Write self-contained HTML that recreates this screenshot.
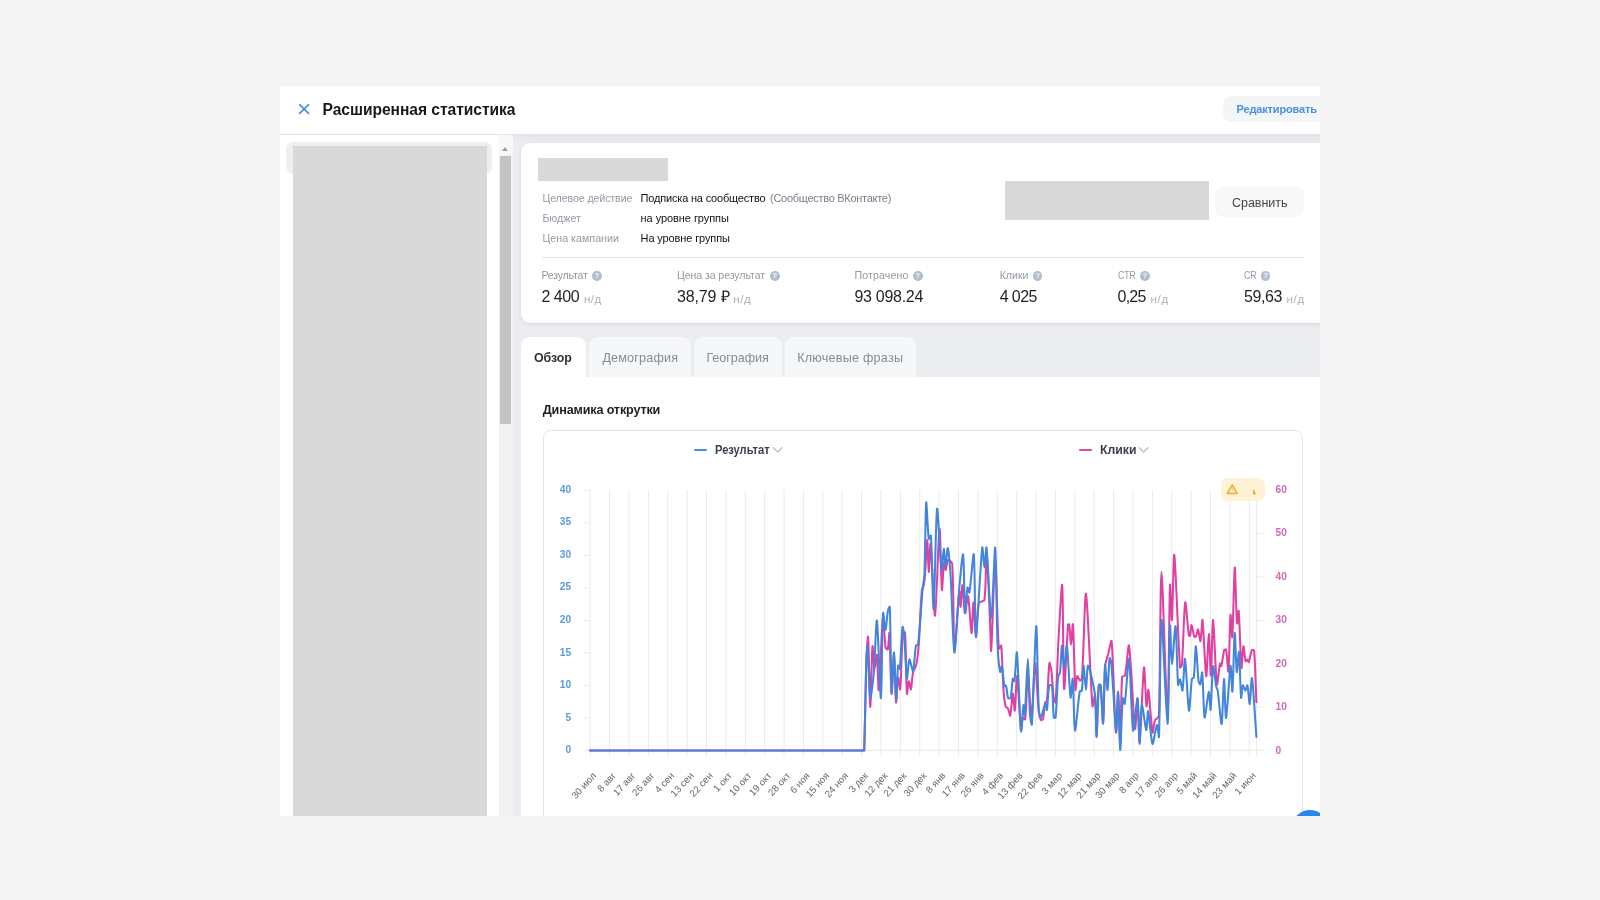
<!DOCTYPE html>
<html lang="ru">
<head>
<meta charset="utf-8">
<title>Расширенная статистика</title>
<style>
*{box-sizing:border-box;margin:0;padding:0}
html,body{width:1600px;height:900px;overflow:hidden;background:#f5f5f5;font-family:"Liberation Sans",sans-serif;}
#shot{position:absolute;left:280px;top:85px;width:1040px;height:731px;background:#fff;overflow:hidden}
#in{position:absolute;left:-280px;top:-85px;width:1600px;height:900px;will-change:transform;filter:blur(0.55px)}
#in *{position:absolute;white-space:nowrap}
#in span{position:static}
.t{line-height:1}
.yl{font-size:10.2px;font-weight:bold;color:#5b9bdb;text-align:right}
.yr{font-size:10.2px;font-weight:bold;color:#d468b4}
.xl{font-size:9.7px;color:#666;line-height:12px;transform-origin:100% 50%;transform:rotate(-48deg)}
.q{width:9.4px;height:9.4px;border-radius:50%;background:#b5bfcc;color:#f4f6f8;font-size:7.5px;font-weight:bold;line-height:9.6px;text-align:center}
</style>
</head>
<body>
<div id="shot"><div id="in">
  <!-- header -->
  <div style="left:280px;top:85px;width:1040px;height:50px;background:#fff;border-bottom:1px solid #e4e5e7;border-top:1px solid #f0f0f0"></div>
  <svg style="left:298px;top:103px" width="12" height="12" viewBox="0 0 12 12"><path d="M1.7 1.6L10.5 10.4M10.5 1.6L1.7 10.4" stroke="#3f8de2" stroke-width="1.5" stroke-linecap="round" fill="none"/></svg>
  <div style="left:1222.5px;top:96px;width:120px;height:26px;border-radius:8px;background:#f4f5f7"></div>

  <!-- sidebar -->
  <div style="left:286px;top:142px;width:205.5px;height:32px;border-radius:7px;background:#efefef"></div>
  <div style="left:292.7px;top:146px;width:194.5px;height:680px;background:#d9d9d9"></div>
  <!-- scrollbar -->
  <div style="left:499.3px;top:135px;width:13.7px;height:690px;background:#f2f2f2"></div>
  <div style="left:499.3px;top:135px;width:13.7px;height:20px;background:#f8f8f8"></div>
  <div style="left:501.7px;top:146.6px;width:0;height:0;border-left:3.7px solid transparent;border-right:3.7px solid transparent;border-bottom:4px solid #a0a0a0"></div>
  <div style="left:500.4px;top:156px;width:10.7px;height:268.3px;background:#c3c3c3"></div>

  <!-- content bg -->
  <div style="left:513px;top:135px;width:820px;height:690px;background:#ebedf0"></div>
  <div style="left:513px;top:135px;width:820px;height:7px;background:linear-gradient(#e3e5e9,#ebedf0)"></div>

  <!-- card 1 -->
  <div style="left:521.3px;top:143.3px;width:820px;height:180px;background:#fff;border-radius:9px;box-shadow:0 1px 4px rgba(0,0,0,.10)"></div>
  <div style="left:538.3px;top:158px;width:130px;height:22.7px;background:#d9d9d9"></div>
  <div style="left:1005px;top:181px;width:204px;height:38.5px;background:#d9d9d9"></div>
  <div style="left:1215.3px;top:187px;width:88.7px;height:29.5px;border-radius:8px;background:#f8f8f9"></div>
  <div style="left:541.5px;top:257px;width:763px;height:1px;background:#e3e8ec"></div>

  <div class="q" style="left:592.4px;top:271.2px">?</div>
  <div class="q" style="left:770.2px;top:271.2px">?</div>
  <div class="q" style="left:913.2px;top:271.2px">?</div>
  <div class="q" style="left:1033px;top:271.2px">?</div>
  <div class="q" style="left:1140.2px;top:271.2px">?</div>
  <div class="q" style="left:1261px;top:271.2px">?</div>

  <!-- tabs -->
  <div style="left:588.7px;top:337px;width:102.3px;height:45px;border-radius:9px 9px 0 0;background:#f6f7f9"></div>
  <div style="left:693.7px;top:337px;width:88px;height:45px;border-radius:9px 9px 0 0;background:#f6f7f9"></div>
  <div style="left:784.8px;top:337px;width:131.2px;height:45px;border-radius:9px 9px 0 0;background:#f6f7f9"></div>
  <div style="left:521.3px;top:337px;width:64.3px;height:45px;border-radius:9px 9px 0 0;background:#fff"></div>
  <!-- panel 2 -->
  <div style="left:521.3px;top:376.7px;width:820px;height:460px;background:#fff"></div>
  <!-- chart frame -->
  <div style="left:543.3px;top:430.4px;width:760px;height:420px;border:1px solid #e2e4e7;border-radius:8px;background:#fff"></div>

  <!-- legend -->
  <div style="left:694px;top:449.4px;width:13.2px;height:2px;border-radius:1px;background:#4a8fdd"></div>
  <div style="left:1078.7px;top:449.4px;width:13.2px;height:2px;border-radius:1px;background:#e0479f"></div>
  <svg style="left:772px;top:446px" width="12" height="8" viewBox="0 0 12 8"><path d="M1.3 1.8L5.6 6L9.9 1.8" stroke="#b9c1cb" stroke-width="1.4" fill="none" stroke-linecap="round" stroke-linejoin="round"/></svg>
  <svg style="left:1138px;top:446px" width="12" height="8" viewBox="0 0 12 8"><path d="M1.3 1.8L5.6 6L9.9 1.8" stroke="#b9c1cb" stroke-width="1.4" fill="none" stroke-linecap="round" stroke-linejoin="round"/></svg>

<svg id="chart" style="left:0;top:0" width="1600" height="900" viewBox="0 0 1600 900">
<path d="M590.20 490V756.5M609.59 490V756.5M628.97 490V756.5M648.36 490V756.5M667.74 490V756.5M687.12 490V756.5M706.51 490V756.5M725.90 490V756.5M745.28 490V756.5M764.67 490V756.5M784.05 490V756.5M803.44 490V756.5M822.82 490V756.5M842.21 490V756.5M861.59 490V756.5M880.98 490V756.5M900.36 490V756.5M919.75 490V756.5M939.13 490V756.5M958.52 490V756.5M977.90 490V756.5M997.29 490V756.5M1016.67 490V756.5M1036.06 490V756.5M1055.44 490V756.5M1074.83 490V756.5M1094.21 490V756.5M1113.60 490V756.5M1132.98 490V756.5M1152.37 490V756.5M1171.75 490V756.5M1191.14 490V756.5M1210.52 490V756.5M1229.91 490V756.5M1249.29 490V756.5M1256.6 490V756.5M583 490.30H590.3M583 522.81H590.3M583 555.32H590.3M583 587.83H590.3M583 620.34H590.3M583 652.85H590.3M583 685.36H590.3M583 717.87H590.3M583 750.38H590.3M1256.6 490.30H1264M1256.6 533.65H1264M1256.6 577.00H1264M1256.6 620.35H1264M1256.6 663.70H1264M1256.6 707.05H1264M1256.6 750.40H1264M583 750.4H1264" stroke="#ebebeb" stroke-width="1" fill="none"/>
<path d="M590.0 750.4C663.8 750.4 789.4 750.4 863.2 750.4C863.5 750.4 864.2 750.4 864.2 750.4C865.1 726.3 865.6 684.4 866.4 660.0C866.6 653.8 867.8 633.8 868.1 636.9C868.9 646.4 869.6 705.5 870.2 706.9C870.8 708.1 871.7 654.0 872.5 646.2C872.8 643.5 873.8 666.5 874.5 668.0C874.9 668.9 876.6 653.4 876.9 655.0C877.7 659.3 878.2 693.3 878.8 690.0C879.9 683.1 881.7 625.1 883.0 617.0C883.5 613.6 884.4 639.5 885.6 647.5C885.7 648.2 887.6 650.0 887.8 649.4C888.6 646.1 889.2 630.4 889.4 633.0C890.2 642.4 890.8 690.1 891.6 693.8C892.1 696.1 893.5 653.9 894.0 655.0C894.7 656.3 895.3 698.5 896.0 702.5C896.4 704.6 897.3 679.9 898.1 677.5C898.5 676.3 900.0 691.4 900.2 689.4C901.2 681.3 901.4 653.2 902.5 640.0C902.7 637.9 904.9 630.8 905.0 632.5C906.1 645.4 906.1 682.8 906.9 693.8C907.1 696.0 908.1 682.0 908.8 681.2C909.2 680.8 910.5 690.2 910.9 689.4C911.7 687.7 912.1 676.6 913.1 672.0C913.5 670.0 915.8 667.0 916.2 665.0C917.3 660.4 918.1 652.2 918.5 647.5C919.7 632.0 920.6 605.4 921.9 590.0C922.0 588.8 923.3 587.1 923.5 586.0C924.1 583.1 924.8 578.0 925.0 575.0C925.8 565.6 926.7 540.4 927.2 540.0C927.7 539.6 928.3 571.4 928.8 571.9C929.2 572.4 930.1 540.4 930.6 543.8C931.8 552.2 933.9 617.4 935.0 615.6C936.3 613.4 938.4 532.8 939.5 528.8C940.3 525.9 941.1 583.7 941.9 590.0C942.3 592.8 943.2 566.7 944.0 562.5C944.2 561.3 945.3 570.3 945.8 570.0C946.4 569.6 946.9 561.1 948.0 560.0C948.6 559.4 952.1 562.3 952.2 563.8C953.9 586.6 953.3 645.6 954.4 650.0C955.2 653.0 958.1 600.4 959.4 591.2C959.8 588.8 960.3 607.6 960.6 606.9C961.1 605.9 962.0 584.3 962.5 585.0C963.2 585.9 964.1 611.1 965.0 613.0C965.6 614.1 967.5 594.5 968.1 596.2C969.3 600.0 970.7 632.2 971.5 633.1C972.2 633.9 972.9 602.0 973.5 602.5C974.1 603.0 975.3 636.8 976.0 636.9C976.7 637.0 976.8 611.5 978.8 603.1C979.1 601.5 984.2 601.6 984.4 600.0C986.2 587.8 985.9 549.8 986.5 552.0C987.4 555.2 989.1 601.6 990.0 620.0C990.4 628.3 990.9 654.7 991.2 650.6C992.3 638.5 994.2 560.3 995.2 560.0C996.3 559.8 997.2 626.6 998.8 648.8C998.8 649.8 1001.1 644.7 1001.2 645.6C1002.4 655.8 1002.6 678.0 1003.5 690.0C1003.8 694.4 1004.6 702.1 1005.6 706.2C1005.8 707.1 1007.7 707.9 1008.1 708.8C1008.9 710.4 1009.9 716.6 1010.2 715.6C1011.2 712.5 1012.1 694.5 1012.8 693.8C1013.3 693.2 1014.4 712.2 1014.8 710.6C1015.5 707.4 1016.4 674.2 1017.1 676.2C1018.1 679.4 1019.7 721.0 1021.0 730.0C1021.3 732.1 1022.1 719.8 1023.0 717.5C1023.2 717.0 1025.2 720.1 1025.2 719.4C1026.5 708.6 1027.0 675.2 1027.9 675.0C1028.7 674.8 1030.7 719.4 1031.5 718.0C1032.6 716.2 1034.0 663.9 1035.0 663.0C1035.9 662.2 1037.4 698.8 1038.8 712.0C1039.0 714.2 1040.0 718.5 1040.9 720.0C1041.2 720.4 1042.9 719.6 1043.0 719.0C1044.0 714.7 1044.3 706.3 1045.3 702.0C1045.4 701.6 1046.9 701.7 1046.9 701.2C1048.0 691.2 1048.4 669.4 1049.4 663.0C1049.6 661.5 1051.2 669.5 1051.5 672.0C1052.4 679.2 1052.8 691.6 1053.8 698.8C1053.9 699.9 1055.5 703.5 1055.6 702.5C1056.8 687.6 1057.5 656.9 1058.5 640.0C1059.3 625.1 1061.7 580.4 1062.2 585.0C1063.2 593.6 1063.1 682.2 1064.1 688.8C1064.7 692.8 1066.7 641.5 1068.1 624.4C1068.1 624.1 1069.3 624.1 1069.3 624.4C1070.0 629.7 1070.5 645.0 1071.0 645.0C1071.5 645.0 1072.6 621.5 1072.9 624.4C1073.8 633.6 1074.4 678.4 1075.4 690.0C1075.6 692.4 1076.3 678.1 1077.2 676.2C1077.6 675.6 1079.2 680.3 1080.0 680.6C1080.5 680.8 1081.9 678.9 1082.0 678.0C1083.6 655.4 1084.8 590.5 1086.0 593.8C1087.6 598.1 1090.3 681.4 1092.5 706.2C1092.7 708.8 1094.8 693.3 1095.0 695.0C1095.9 701.0 1096.1 736.1 1096.6 735.0C1097.2 733.7 1097.7 698.7 1098.8 686.0C1098.8 685.5 1100.5 685.5 1100.6 686.0C1101.7 695.2 1102.6 724.2 1103.1 722.0C1103.9 718.5 1104.2 680.3 1105.3 665.0C1105.5 662.1 1107.3 657.3 1108.1 654.4C1109.0 650.8 1111.3 638.5 1111.6 641.2C1113.4 659.6 1114.7 722.7 1115.9 732.5C1116.4 736.7 1117.6 691.5 1118.1 693.0C1118.8 694.9 1119.8 746.9 1120.2 745.0C1120.9 742.5 1120.9 694.8 1122.1 676.9C1122.2 676.1 1124.8 676.4 1125.0 675.6C1126.7 668.0 1128.3 641.8 1129.0 645.6C1131.0 656.1 1133.3 718.1 1135.0 728.8C1135.6 732.6 1137.0 697.5 1137.5 699.0C1138.2 701.1 1139.0 745.1 1139.6 742.0C1140.7 736.6 1142.8 673.8 1144.0 667.5C1144.6 664.2 1145.7 702.0 1146.5 706.2C1146.9 708.1 1148.0 688.0 1148.4 690.0C1149.6 695.1 1151.1 726.3 1152.5 732.5C1152.9 734.4 1153.9 723.1 1155.0 720.0C1155.3 719.2 1157.0 718.7 1157.5 718.1C1158.1 717.4 1159.0 715.9 1159.0 715.0C1160.1 676.5 1160.4 571.9 1161.5 571.9C1162.6 571.9 1166.3 713.1 1167.5 715.0C1168.6 716.7 1169.1 605.2 1170.0 585.0C1170.3 579.6 1171.5 622.8 1171.9 620.0C1172.7 614.7 1173.5 550.3 1174.3 555.0C1175.7 563.1 1178.0 638.6 1180.0 667.5C1180.1 668.3 1181.8 665.8 1181.9 665.0C1183.2 648.3 1184.0 607.8 1185.2 602.5C1185.9 599.7 1187.5 626.4 1188.8 635.0C1188.8 635.4 1189.9 636.3 1190.0 636.0C1190.7 633.6 1191.0 624.9 1191.6 625.0C1192.2 625.1 1193.3 634.4 1194.4 636.9C1194.6 637.3 1196.0 636.5 1196.2 636.0C1197.0 634.4 1197.7 628.9 1198.1 629.4C1198.8 630.3 1200.0 642.2 1200.4 641.2C1201.2 639.6 1202.1 617.4 1202.5 620.0C1203.6 626.9 1205.3 674.1 1206.2 676.2C1207.0 677.8 1208.1 633.8 1208.8 633.8C1209.4 633.7 1210.4 677.2 1210.9 675.6C1211.6 673.5 1212.3 618.9 1213.1 620.0C1214.0 621.3 1215.5 675.6 1216.9 684.4C1217.4 687.3 1219.0 667.9 1220.0 663.5C1220.1 662.9 1221.1 666.5 1221.3 666.0C1222.3 662.9 1223.1 654.0 1224.2 650.0C1224.4 649.5 1226.0 649.1 1226.1 649.6C1227.1 654.9 1228.1 674.1 1228.4 671.5C1229.3 664.8 1229.7 621.7 1230.5 615.0C1230.8 612.4 1232.0 640.1 1232.3 637.0C1233.2 627.3 1234.0 569.5 1234.8 567.5C1235.3 565.9 1236.1 613.8 1237.0 623.4C1237.2 625.5 1238.5 608.8 1238.7 611.0C1239.7 620.9 1240.5 661.1 1241.4 668.0C1241.8 670.6 1242.7 647.3 1243.4 646.2C1243.9 645.5 1244.7 658.2 1245.6 661.3C1245.8 661.8 1247.0 659.5 1247.4 659.6C1247.9 659.7 1248.6 662.7 1248.8 662.2C1249.8 660.1 1250.6 652.7 1251.8 650.1C1252.0 649.6 1254.0 650.1 1254.1 650.7C1255.3 664.1 1255.8 688.3 1256.4 702.2" stroke="#e0409f" stroke-width="2.05" fill="none" stroke-linejoin="round" stroke-linecap="round"/>
<path d="M590.0 750.4C663.8 750.4 789.4 750.4 863.2 750.4C863.5 750.4 864.2 750.4 864.2 750.4C865.0 727.3 865.5 687.3 866.2 664.0C866.4 659.1 867.2 643.6 867.5 646.0C868.3 652.8 869.1 693.2 870.2 698.1C870.8 700.5 873.2 679.8 873.8 673.0C875.0 658.9 876.1 617.9 876.9 620.6C878.1 624.6 880.1 699.1 880.9 698.1C881.8 697.0 882.0 628.4 883.1 613.1C883.3 610.0 885.0 630.2 885.6 630.0C886.3 629.7 886.9 616.2 887.8 611.2C888.0 610.0 889.7 605.7 889.8 606.9C890.7 627.7 890.8 684.1 891.6 692.5C892.0 696.4 893.4 651.6 894.0 652.5C894.7 653.6 895.6 697.9 896.2 700.0C896.7 701.5 897.2 673.2 898.1 665.6C898.2 664.8 899.7 669.6 899.8 668.8C900.8 659.1 901.5 635.0 902.5 626.9C902.7 625.5 903.9 631.9 904.1 633.8C905.1 645.9 905.9 673.9 906.9 678.8C907.3 680.8 908.4 660.7 909.4 659.4C910.0 658.6 912.5 672.2 913.1 671.0C914.3 668.5 914.7 652.0 915.9 645.6C916.0 645.0 918.0 645.6 918.1 645.0C919.8 630.6 921.2 604.8 922.5 590.0C922.9 585.9 924.2 579.1 924.4 575.0C925.2 555.5 925.5 509.0 926.2 502.5C926.6 499.2 927.6 530.7 928.8 538.8C928.9 539.6 930.8 534.7 930.9 535.6C932.1 553.6 932.9 612.1 933.6 609.0C934.6 604.8 935.8 515.3 937.1 508.8C937.9 504.8 940.2 562.0 941.5 570.0C942.0 572.8 943.2 549.2 943.8 548.8C944.3 548.4 945.1 567.0 945.6 566.9C946.1 566.8 947.2 547.1 947.8 548.1C948.6 549.6 950.1 568.6 950.6 576.2C951.9 596.8 953.2 649.8 954.4 652.5C955.4 654.6 957.3 609.6 958.8 593.8C959.7 583.1 962.4 552.3 963.1 554.4C964.1 557.5 964.2 606.9 965.0 613.1C965.4 615.8 966.5 592.1 967.5 587.5C967.7 586.5 969.2 593.6 969.4 592.5C970.9 584.7 973.2 550.6 973.8 554.4C975.0 562.6 974.9 637.8 976.0 636.9C977.2 635.9 980.4 562.8 982.2 547.5C982.7 544.1 983.8 567.5 984.4 567.5C985.0 567.5 986.1 544.5 986.5 547.5C987.9 558.3 990.1 618.8 991.2 618.8C992.4 618.8 994.5 544.7 995.2 547.5C996.2 551.2 996.5 616.9 997.5 642.5C997.8 650.5 999.0 666.6 1000.0 671.9C1000.2 673.0 1001.6 665.4 1001.9 666.2C1002.8 669.2 1003.4 681.4 1004.4 686.2C1004.5 686.7 1005.9 685.2 1006.0 685.6C1006.9 688.4 1007.1 695.3 1008.1 698.1C1008.3 698.7 1010.5 698.7 1010.6 698.1C1011.7 693.5 1011.9 682.7 1012.8 678.8C1012.9 678.1 1014.3 681.9 1014.4 681.2C1015.4 674.8 1016.4 648.9 1016.9 652.5C1018.2 662.4 1019.7 720.6 1021.0 731.2C1021.4 734.8 1022.8 708.2 1023.5 705.0C1023.8 703.8 1024.6 716.9 1024.8 715.0C1025.8 704.4 1027.2 658.8 1027.9 658.8C1028.6 658.8 1029.1 699.9 1030.0 715.0C1030.2 717.6 1031.7 726.5 1031.9 724.4C1033.4 702.6 1035.3 628.3 1036.2 626.2C1037.1 624.5 1037.6 687.5 1038.8 710.0C1038.9 712.1 1040.3 718.1 1040.9 717.5C1042.0 716.4 1044.2 705.1 1045.3 703.8C1045.8 703.1 1046.7 711.0 1046.9 710.0C1047.7 706.1 1048.0 691.5 1049.2 685.6C1049.3 684.9 1051.9 684.9 1052.0 685.6C1053.1 693.5 1052.8 709.4 1053.8 717.5C1053.8 718.0 1055.5 718.0 1055.6 717.5C1056.7 707.0 1057.0 687.8 1058.1 676.9C1058.2 675.6 1059.8 673.8 1060.0 672.5C1060.9 665.3 1061.3 646.3 1061.9 645.6C1062.4 645.0 1063.4 668.0 1064.1 668.0C1064.8 668.0 1066.4 643.2 1066.9 645.6C1068.1 651.2 1069.4 690.9 1070.6 697.5C1071.0 699.9 1072.4 676.4 1072.8 678.8C1073.6 685.3 1073.9 728.7 1075.0 730.6C1075.8 732.1 1078.0 701.5 1079.8 691.2C1079.8 690.7 1081.8 691.2 1081.9 690.6C1082.8 684.2 1082.9 665.7 1083.5 665.6C1084.0 665.5 1085.4 690.0 1086.0 690.0C1086.6 690.0 1087.0 665.0 1088.1 665.6C1089.4 666.3 1094.0 686.9 1095.0 695.0C1096.3 706.2 1096.1 738.1 1096.6 736.9C1097.2 735.4 1097.7 698.5 1098.8 685.0C1098.8 684.5 1100.5 684.5 1100.6 685.0C1101.7 695.0 1102.6 725.9 1103.1 723.8C1103.8 720.5 1104.2 671.4 1105.0 665.0C1105.4 662.3 1107.0 690.8 1107.5 690.0C1108.2 689.0 1108.7 664.8 1109.6 658.1C1109.7 657.2 1111.1 660.9 1111.2 662.0C1112.9 680.6 1115.1 726.1 1116.2 731.2C1116.9 734.2 1117.7 689.9 1118.1 691.9C1118.7 694.9 1119.6 749.1 1120.2 750.0C1120.8 750.4 1121.7 709.3 1122.8 698.1C1122.9 696.8 1124.6 705.0 1124.8 703.8C1126.2 694.4 1128.1 656.0 1129.0 658.8C1130.4 663.2 1131.5 723.3 1133.1 730.6C1133.8 733.9 1136.8 696.6 1137.5 698.1C1138.5 700.2 1139.0 742.7 1139.6 743.8C1140.1 744.6 1140.8 707.2 1141.9 705.0C1142.6 703.5 1145.3 729.0 1146.2 730.0C1147.0 730.7 1147.5 709.9 1148.1 711.2C1149.2 713.6 1151.0 741.4 1152.5 743.8C1153.4 745.1 1155.8 726.1 1156.9 725.0C1157.6 724.3 1158.9 739.6 1159.0 736.9C1160.1 711.2 1160.3 621.9 1161.5 620.0C1162.6 618.3 1166.3 723.0 1167.5 723.8C1168.6 724.5 1169.1 637.2 1170.0 625.6C1170.3 621.1 1171.1 663.9 1171.9 664.0C1172.7 664.1 1174.9 624.0 1175.6 626.2C1176.6 629.7 1177.0 672.0 1178.1 685.0C1178.2 686.3 1179.6 678.9 1180.0 679.4C1180.8 680.4 1182.1 692.1 1182.5 690.6C1183.5 686.6 1184.3 656.9 1185.0 659.0C1186.1 662.3 1187.8 707.3 1189.0 710.6C1189.7 712.6 1190.7 687.1 1191.9 678.8C1192.0 678.2 1193.7 678.1 1193.8 677.5C1194.8 669.3 1195.3 645.9 1195.9 646.2C1196.6 646.7 1197.5 671.4 1198.5 680.6C1198.6 681.7 1200.0 685.0 1200.2 684.4C1201.0 682.8 1202.0 670.6 1202.2 672.5C1203.2 679.5 1203.5 714.2 1204.6 717.5C1205.2 719.4 1207.8 693.1 1208.8 691.9C1209.4 691.1 1210.3 712.0 1210.6 710.0C1211.4 705.1 1212.1 670.6 1213.1 666.2C1213.6 664.2 1215.2 680.9 1216.2 686.2C1216.5 687.5 1217.5 689.5 1217.7 690.7C1219.0 699.6 1220.9 725.3 1221.6 724.0C1222.6 722.2 1223.3 679.9 1224.0 679.0C1224.6 678.2 1225.3 719.5 1226.1 718.0C1227.1 716.0 1229.4 670.8 1230.5 666.0C1231.1 663.6 1232.1 694.2 1232.4 691.5C1233.2 685.3 1234.0 636.2 1234.7 633.0C1235.2 630.9 1236.0 668.6 1236.8 672.0C1237.2 673.7 1238.6 649.9 1239.0 652.0C1239.8 656.8 1240.3 690.8 1241.1 697.8C1241.3 699.7 1242.1 686.6 1242.9 685.3C1243.3 684.7 1244.6 690.7 1245.2 690.7C1245.8 690.7 1247.1 684.5 1247.4 685.3C1248.3 688.0 1249.2 704.8 1249.7 704.0C1250.4 702.9 1251.4 675.5 1252.0 678.2C1253.3 684.4 1255.2 721.1 1256.4 736.9" stroke="#4285dc" stroke-width="2.05" fill="none" stroke-linejoin="round" stroke-linecap="round"/>
</svg>
<div class="t yl" style="right:1028.8px;top:484.60px">40</div>
<div class="t yl" style="right:1028.8px;top:517.21px">35</div>
<div class="t yl" style="right:1028.8px;top:549.82px">30</div>
<div class="t yl" style="right:1028.8px;top:582.43px">25</div>
<div class="t yl" style="right:1028.8px;top:615.04px">20</div>
<div class="t yl" style="right:1028.8px;top:647.65px">15</div>
<div class="t yl" style="right:1028.8px;top:680.26px">10</div>
<div class="t yl" style="right:1028.8px;top:712.87px">5</div>
<div class="t yl" style="right:1028.8px;top:745.48px">0</div>
<div class="t yr" style="left:1275.6px;top:484.80px">60</div>
<div class="t yr" style="left:1275.6px;top:528.30px">50</div>
<div class="t yr" style="left:1275.6px;top:571.80px">40</div>
<div class="t yr" style="left:1275.6px;top:615.30px">30</div>
<div class="t yr" style="left:1275.6px;top:658.80px">20</div>
<div class="t yr" style="left:1275.6px;top:702.30px">10</div>
<div class="t yr" style="left:1275.6px;top:745.80px">0</div>
<div class="t xl" style="right:1005.20px;top:768.00px">30 июл</div>
<div class="t xl" style="right:985.81px;top:768.00px">8 авг</div>
<div class="t xl" style="right:966.43px;top:768.00px">17 авг</div>
<div class="t xl" style="right:947.04px;top:768.00px">26 авг</div>
<div class="t xl" style="right:927.66px;top:768.00px">4 сен</div>
<div class="t xl" style="right:908.27px;top:768.00px">13 сен</div>
<div class="t xl" style="right:888.89px;top:768.00px">22 сен</div>
<div class="t xl" style="right:869.50px;top:768.00px">1 окт</div>
<div class="t xl" style="right:850.12px;top:768.00px">10 окт</div>
<div class="t xl" style="right:830.73px;top:768.00px">19 окт</div>
<div class="t xl" style="right:811.35px;top:768.00px">28 окт</div>
<div class="t xl" style="right:791.96px;top:768.00px">6 ноя</div>
<div class="t xl" style="right:772.58px;top:768.00px">15 ноя</div>
<div class="t xl" style="right:753.19px;top:768.00px">24 ноя</div>
<div class="t xl" style="right:733.81px;top:768.00px">3 дек</div>
<div class="t xl" style="right:714.42px;top:768.00px">12 дек</div>
<div class="t xl" style="right:695.04px;top:768.00px">21 дек</div>
<div class="t xl" style="right:675.65px;top:768.00px">30 дек</div>
<div class="t xl" style="right:656.27px;top:768.00px">8 янв</div>
<div class="t xl" style="right:636.88px;top:768.00px">17 янв</div>
<div class="t xl" style="right:617.50px;top:768.00px">26 янв</div>
<div class="t xl" style="right:598.11px;top:768.00px">4 фев</div>
<div class="t xl" style="right:578.73px;top:768.00px">13 фев</div>
<div class="t xl" style="right:559.35px;top:768.00px">22 фев</div>
<div class="t xl" style="right:539.96px;top:768.00px">3 мар</div>
<div class="t xl" style="right:520.58px;top:768.00px">12 мар</div>
<div class="t xl" style="right:501.19px;top:768.00px">21 мар</div>
<div class="t xl" style="right:481.80px;top:768.00px">30 мар</div>
<div class="t xl" style="right:462.42px;top:768.00px">8 апр</div>
<div class="t xl" style="right:443.03px;top:768.00px">17 апр</div>
<div class="t xl" style="right:423.65px;top:768.00px">26 апр</div>
<div class="t xl" style="right:404.26px;top:768.00px">5 май</div>
<div class="t xl" style="right:384.88px;top:768.00px">14 май</div>
<div class="t xl" style="right:365.49px;top:768.00px">23 май</div>
<div class="t xl" style="right:346.11px;top:768.00px">1 июн</div>
  <!-- warning badge -->
  <div style="left:1220.6px;top:478px;width:44.8px;height:22.6px;border-radius:6.5px;background:#fef2d7"></div>
  <svg style="left:1224px;top:481px" width="17" height="16" viewBox="0 0 17 16"><path d="M8.2 3.9L13.2 12.6H3.2Z" stroke="#f1a92a" stroke-width="1.5" fill="none" stroke-linejoin="round"/><path d="M8.2 7.4V9.5M8.2 10.9V11" stroke="#f1a92a" stroke-width="1" stroke-linecap="round" opacity=".75"/></svg>
  <svg style="left:1250px;top:486px" width="8" height="10" viewBox="0 0 8 10"><path d="M3 3.2C4.6 4.6 5.6 6.4 5.7 8.4L3.1 8.6Z" fill="#f1a92a"/></svg>
  <!-- FAB -->
  <div style="left:1291.5px;top:810.3px;width:36px;height:36px;border-radius:50%;background:#2a86e8"></div>

<div id="title" class="t" style="left:322.60px;top:102.09px;font-size:15.6px;font-weight:bold;color:#17181a;letter-spacing:-0.046px">Расширенная статистика</div>
<div id="edit" class="t" style="left:1236.60px;top:103.59px;font-size:11px;font-weight:bold;color:#4990e3;letter-spacing:-0.158px">Редактировать</div>
<div id="l1" class="t" style="left:542.40px;top:193.43px;font-size:10.6px;font-weight:normal;color:#929aa4;letter-spacing:-0.085px">Целевое действие</div>
<div id="l2" class="t" style="left:542.40px;top:213.43px;font-size:10.6px;font-weight:normal;color:#929aa4;letter-spacing:0.026px">Бюджет</div>
<div id="l3" class="t" style="left:542.40px;top:233.43px;font-size:10.6px;font-weight:normal;color:#929aa4;letter-spacing:0.062px">Цена кампании</div>
<div id="v1a" class="t" style="left:640.60px;top:193.09px;font-size:11px;font-weight:normal;color:#111;letter-spacing:-0.183px">Подписка на сообщество</div>
<div id="v1b" class="t" style="left:770.00px;top:193.09px;font-size:11px;font-weight:normal;color:#77808b;letter-spacing:-0.279px">(Сообщество ВКонтакте)</div>
<div id="v2" class="t" style="left:640.60px;top:213.09px;font-size:11px;font-weight:normal;color:#111;letter-spacing:-0.065px">на уровне группы</div>
<div id="v3" class="t" style="left:640.60px;top:233.09px;font-size:11px;font-weight:normal;color:#111;letter-spacing:-0.123px">На уровне группы</div>
<div id="cmp" class="t" style="left:1232.00px;top:196.62px;font-size:12.5px;font-weight:normal;color:#444547;letter-spacing:-0.026px">Сравнить</div>
<div id="m1" class="t" style="left:541.50px;top:270.43px;font-size:10.6px;font-weight:normal;color:#929aa4;letter-spacing:-0.241px">Результат</div>
<div id="m2" class="t" style="left:677.00px;top:270.43px;font-size:10.6px;font-weight:normal;color:#929aa4;letter-spacing:-0.095px">Цена за результат</div>
<div id="m3" class="t" style="left:854.50px;top:270.43px;font-size:10.6px;font-weight:normal;color:#929aa4;letter-spacing:0.120px">Потрачено</div>
<div id="m4" class="t" style="left:999.70px;top:270.43px;font-size:10.6px;font-weight:normal;color:#929aa4;letter-spacing:-0.001px">Клики</div>
<div id="m5" class="t" style="left:1117.50px;top:270.60px;font-size:10.4px;font-weight:normal;color:#929aa4;transform-origin:0 50%;transform:scaleX(0.8329)">CTR</div>
<div id="m6" class="t" style="left:1244.00px;top:270.60px;font-size:10.4px;font-weight:normal;color:#929aa4;transform-origin:0 50%;transform:scaleX(0.8385)">CR</div>
<div id="n1" class="t" style="left:541.50px;top:288.96px;font-size:16px;font-weight:normal;color:#1f2022;letter-spacing:-0.485px">2 400</div>
<div id="n2" class="t" style="left:677.00px;top:288.96px;font-size:16px;font-weight:normal;color:#1f2022;letter-spacing:-0.131px">38,79 ₽</div>
<div id="n3" class="t" style="left:854.50px;top:288.96px;font-size:16px;font-weight:normal;color:#1f2022;letter-spacing:-0.298px">93 098.24</div>
<div id="n4" class="t" style="left:999.70px;top:288.96px;font-size:16px;font-weight:normal;color:#1f2022;letter-spacing:-0.585px">4 025</div>
<div id="n5" class="t" style="left:1117.50px;top:288.96px;font-size:16px;font-weight:normal;color:#1f2022;letter-spacing:-0.747px">0,25</div>
<div id="n6" class="t" style="left:1244.00px;top:288.96px;font-size:16px;font-weight:normal;color:#1f2022;letter-spacing:-0.410px">59,63</div>
<div id="d1" class="t" style="left:584.00px;top:292.58px;font-size:11.6px;font-weight:normal;color:#a9b0b9;letter-spacing:0.388px">н/д</div>
<div id="d2" class="t" style="left:733.20px;top:292.58px;font-size:11.6px;font-weight:normal;color:#a9b0b9;letter-spacing:0.538px">н/д</div>
<div id="d5" class="t" style="left:1150.50px;top:292.58px;font-size:11.6px;font-weight:normal;color:#a9b0b9;letter-spacing:0.638px">н/д</div>
<div id="d6" class="t" style="left:1286.50px;top:292.58px;font-size:11.6px;font-weight:normal;color:#a9b0b9;letter-spacing:0.638px">н/д</div>
<div id="t1" class="t" style="left:534.00px;top:351.80px;font-size:12.4px;font-weight:bold;color:#303135;letter-spacing:-0.087px">Обзор</div>
<div id="t2" class="t" style="left:602.40px;top:351.63px;font-size:12.6px;font-weight:normal;color:#848c97;letter-spacing:0.179px">Демография</div>
<div id="t3" class="t" style="left:706.40px;top:351.63px;font-size:12.6px;font-weight:normal;color:#848c97;letter-spacing:-0.048px">География</div>
<div id="t4" class="t" style="left:797.20px;top:351.63px;font-size:12.6px;font-weight:normal;color:#848c97;letter-spacing:0.241px">Ключевые фразы</div>
<div id="dyn" class="t" style="left:542.80px;top:403.63px;font-size:12.6px;font-weight:bold;color:#1d1e20;letter-spacing:-0.150px">Динамика открутки</div>
<div id="lg1" class="t" style="left:714.50px;top:444.26px;font-size:12.8px;font-weight:bold;color:#3b3f4a;transform-origin:0 50%;transform:scaleX(0.8693)">Результат</div>
<div id="lg2" class="t" style="left:1099.90px;top:444.26px;font-size:12.8px;font-weight:bold;color:#3b3f4a;transform-origin:0 50%;transform:scaleX(0.9567)">Клики</div>
</div></div>
</body>
</html>
